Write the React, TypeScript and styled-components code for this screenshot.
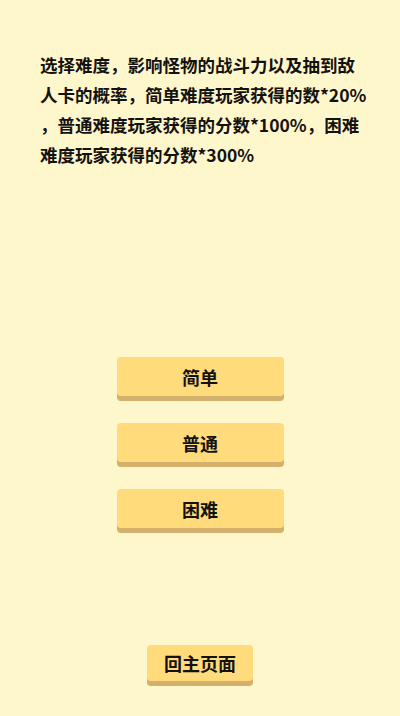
import React from 'react'
import styled, { createGlobalStyle } from 'styled-components'

const GlobalStyle = createGlobalStyle`
  html, body {
    margin: 0;
    padding: 0;
    background: #fff7cc;
  }
  body {
    font-family: "Noto Sans CJK SC", "Noto Sans", sans-serif;
    color: #141210;
  }
`

const Page = styled.main`
  width: 400px;
  height: 716px;
  display: flex;
  flex-direction: column;
  align-items: center;
  background: #fff7cc;
  box-sizing: border-box;
  padding-top: 50px;
`

const Intro = styled.p`
  align-self: stretch;
  margin: 0;
  padding: 0 0 0 40px;
  font-size: 17.5px;
  font-weight: 700;
  line-height: 30px;
`

const Line = styled.span`
  display: block;
  white-space: nowrap;
`

const Choices = styled.div`
  display: flex;
  flex-direction: column;
  gap: 27px;
  margin-top: 187px;
`

const Button = styled.button<{ $width: number; $height: number }>`
  width: ${(p) => p.$width}px;
  height: ${(p) => p.$height}px;
  border: none;
  border-radius: 4px;
  background: #ffdb7b;
  box-shadow: 0 5px 0 #d3b16d;
  font-family: "Noto Sans CJK SC", sans-serif;
  font-size: 18px;
  font-weight: 700;
  color: #141210;
  padding: 0;
  cursor: pointer;
`

const BackButton = styled(Button)`
  margin-top: 117px;
`

const lines = [
  '选择难度，影响怪物的战斗力以及抽到敌',
  '人卡的概率，简单难度玩家获得的数*20%',
  '，普通难度玩家获得的分数*100%，困难',
  '难度玩家获得的分数*300%',
]

const levels = ['简单', '普通', '困难']

export default function App() {
  return (
    <React.Fragment>
      <GlobalStyle />
      <Page>
        <Intro>
          {lines.map((l) => (
            <Line key={l}>{l}</Line>
          ))}
        </Intro>
        <Choices>
          {levels.map((l) => (
            <Button key={l} $width={167} $height={39}>
              {l}
            </Button>
          ))}
        </Choices>
        <BackButton $width={106} $height={36}>
          回主页面
        </BackButton>
      </Page>
    </React.Fragment>
  )
}
